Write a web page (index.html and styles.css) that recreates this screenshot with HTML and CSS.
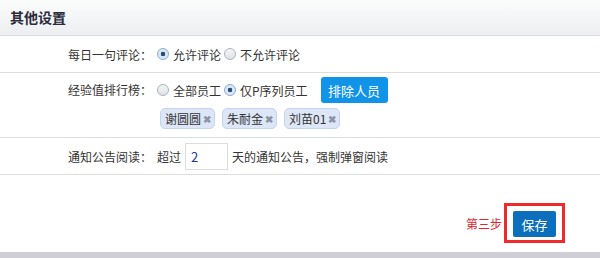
FILE: index.html
```html
<!DOCTYPE html>
<html lang="zh">
<head>
<meta charset="utf-8">
<link rel="stylesheet" href="styles.css">
</head>
<body>
<div class="panel">
  <div class="panel-head">其他设置</div>
  <div class="form">
    <div class="row row-1">
      <div class="label">每日一句评论：</div>
      <div class="field">
        <label class="opt"><span class="radio checked"></span>允许评论</label>
        <label class="opt"><span class="radio"></span>不允许评论</label>
      </div>
    </div>
    <div class="row row-2">
      <div class="label">经验值排行榜：</div>
      <div class="field stack">
        <div class="line">
          <label class="opt"><span class="radio"></span>全部员工</label>
          <label class="opt"><span class="radio checked"></span>仅P序列员工</label>
          <button class="btn-blue">排除人员</button>
        </div>
        <div class="tags">
          <span class="tag">谢圆圆<i class="x">✖</i></span>
          <span class="tag">朱耐金<i class="x">✖</i></span>
          <span class="tag">刘苗01<i class="x">✖</i></span>
        </div>
      </div>
    </div>
    <div class="row row-3">
      <div class="label">通知公告阅读：</div>
      <div class="field">
        <span>超过</span>
        <input class="num" type="text" value="2">
        <span>天的通知公告，强制弹窗阅读</span>
      </div>
    </div>
  </div>
  <div class="footer">
    <span class="step">第三步</span>
    <div class="hl">
      <button class="btn-save">保存</button>
    </div>
  </div>
  <div class="bottom-bar"></div>
</div>
</body>
</html>
```
FILE: styles.css
```css
* { box-sizing: border-box; }
html, body { margin: 0; padding: 0; background: #fff; }
body {
  font-family: "Noto Sans CJK SC", "Microsoft YaHei", sans-serif;
  font-size: 12px;
  color: #333;
  width: 600px;
  height: 258px;
  overflow: hidden;
}
.panel { display: flex; flex-direction: column; height: 258px; }
.panel-head {
  height: 36px;
  line-height: 35px;
  padding-left: 10px;
  font-size: 14px;
  font-weight: bold;
  color: #2a2a3a;
  background: linear-gradient(#fbfcfc, #eceef0);
  border-bottom: 1px solid #dcdcdc;
}
.row {
  display: flex;
  border-bottom: 1px solid #dddddd;
}
.label {
  width: 152px;
  text-align: right;
  flex: none;
}
.row-1 { height: 37px; align-items: center; }
.row-2 { height: 65px; padding-top: 4px; }
.row-2 .label { line-height: 26px; }
.row-3 { height: 37px; align-items: center; }
.field { display: flex; align-items: center; padding-left: 5px; }
.field.stack { flex-direction: column; align-items: flex-start; }
.line { display: flex; align-items: center; height: 26px; }
.opt { display: inline-flex; align-items: center; margin-right: 3px; }
.radio {
  width: 12px; height: 12px;
  border-radius: 50%;
  border: 1px solid #a9b3bd;
  background: linear-gradient(#f4f5f6, #dfe2e5);
  margin-right: 4px;
  position: relative;
}
.radio.checked {
  border-color: #8fa9c7;
  background: radial-gradient(circle, #2b4c73 0 2px, #cfe2f4 2.5px, #e7f1fb 6px);
}
.btn-blue {
  margin-left: 10px;
  height: 26px;
  width: 67px;
  border: none;
  border-radius: 3px;
  background: #1193e8;
  color: #fff;
  font-family: inherit;
  font-size: 13px;
  padding: 0;
}
.tags { display: flex; gap: 7px; margin-top: 5px; padding-left: 3px; }
.tag {
  display: inline-flex; align-items: center;
  height: 21px;
  padding: 0 3px 0 4px;
  border: 1px solid #c5d3ec;
  border-radius: 5px;
  background: #dde6f6;
  font-size: 12px;
  color: #333;
}
.x {
  font-style: normal;
  font-size: 10px;
  font-weight: bold;
  color: #8a94a6;
  margin-left: 2px;
}
.num {
  width: 43px; height: 27px;
  margin: 0 4px 0 4px;
  border: 1px solid #ddd;
  padding: 0 5px;
  font-family: inherit;
  font-size: 13px;
  color: #1c3a8a;
  outline: none;
}
.footer {
  flex: 1;
  display: flex;
  justify-content: flex-end;
  align-items: flex-start;
  padding-top: 28px;
  padding-right: 35px;
}
.step {
  color: #e0262c;
  font-size: 12px;
  margin-top: 12px;
  margin-right: 2px;
}
.hl {
  border: 3px solid #ee2a2a;
  padding: 5px 6px 3px 6px;
  width: 61px; height: 40px;
}
.btn-save {
  width: 43px; height: 26px;
  border: none;
  border-radius: 2px;
  background: #0b6fbc;
  color: #fff;
  font-family: inherit;
  font-size: 13px;
  padding: 0;
}
.bottom-bar { height: 6px; background: #cfcdd6; flex: none; }
```
